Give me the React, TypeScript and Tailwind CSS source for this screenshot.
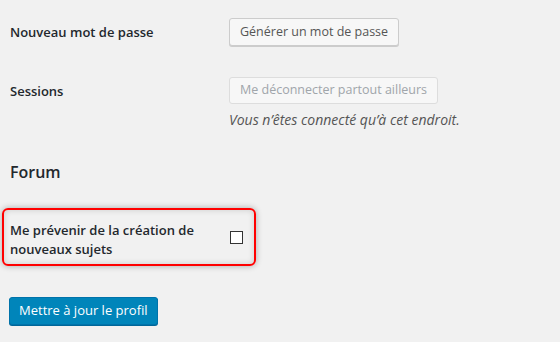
import React from "react";

const App = () => {
  return (
    <div
      className="w-[560px] h-[342px] overflow-hidden bg-[#f1f1f1] text-[#23282d]"
      style={{ fontFamily: '"Open Sans", "Noto Sans", sans-serif' }}
    >
      {/* nouveau mot de passe */}
      <div className="flex items-center pt-[18px]">
        <div className="w-[229px] pl-[10px] pt-[2px] text-[13px] font-semibold">Nouveau mot de passe</div>
        <button className="h-[28px] px-[10px] rounded-[3px] border border-[#ccc] bg-[#f7f7f7] text-[12.5px] text-[#555] shadow-[0_1px_0_#ccc]">
          Générer un mot de passe
        </button>
      </div>

      {/* sessions */}
      <div className="flex items-center mt-[31px]">
        <div className="w-[229px] pl-[10px] pt-[2px] text-[13px] font-semibold">Sessions</div>
        <button className="h-[27px] px-[10px] rounded-[3px] border border-[#ddd] bg-[#f7f7f7] text-[12.5px] text-[#a0a5aa]">
          Me déconnecter partout ailleurs
        </button>
      </div>
      <p className="ml-[229px] mt-[5px] text-[14px] italic text-[#555]">
        Vous n’êtes connecté qu’à cet endroit.
      </p>

      <h2 className="pl-[10px] mt-[30px] text-[16px] font-semibold leading-[24px]">Forum</h2>

      <div className="ml-[2px] mt-[24px] w-[254px] h-[58px] rounded-[6px] border-2 border-[#ff0000] shadow-[0_0_6px_rgba(0,0,0,0.3),inset_0_0_6px_rgba(0,0,0,0.15)] flex items-center">
        <div className="w-[226px] pl-[6px] pt-[5px] text-[13px] font-semibold leading-[19px]">
          Me prévenir de la création de
          <br />
          nouveaux sujets
        </div>
        <span className="w-[13px] h-[13px] border border-[#333] bg-white" />
      </div>

      <button className="ml-[9px] mt-[31px] h-[28px] px-[9px] rounded-[3px] border border-[#0073aa] bg-[#0085ba] text-[13px] text-white shadow-[0_1px_0_#006799]">
        Mettre à jour le profil
      </button>
    </div>
  );
};

export default App;
